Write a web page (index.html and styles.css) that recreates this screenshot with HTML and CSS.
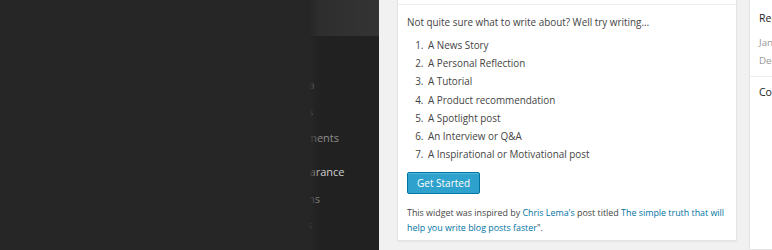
FILE: index.html
```html
<!DOCTYPE html>
<html lang="en">
  <head>
    <meta charset="UTF-8" />
    <title>Dashboard</title>
    <link rel="stylesheet" href="styles.css">
  </head>
  <body>
    <!-- dimmed admin side -->
    <div class="backdrop">
      <div class="backdrop-fill"></div>
      <nav class="admin-menu">
        <div class="admin-bar"></div>
        <ul class="menu-list">
          <li>Media</li>
          <li>Pages</li>
          <li>Comments</li>
          <li class="separator">Appearance</li>
          <li>Plugins</li>
          <li>Users</li>
        </ul>
      </nav>
    </div>

    <!-- dashboard widgets -->
    <main class="dashboard">
      <section class="postbox">
        <div class="postbox-header"></div>
        <div class="postbox-inside">
          <p class="intro">Not quite sure what to write about? Well try writing…</p>
          <ol class="idea-list">
            <li>A News Story</li>
            <li>A Personal Reflection</li>
            <li>A Tutorial</li>
            <li>A Product recommendation</li>
            <li>A Spotlight post</li>
            <li>An Interview or Q&amp;A</li>
            <li>A Inspirational or Motivational post</li>
          </ol>
          <a href="#" class="button-primary">Get Started</a>
          <p class="credit">
            This widget was inspired by <a href="#">Chris Lema's</a> post titled
            <a href="#">The simple truth that will help you write blog posts faster</a>".
          </p>
        </div>
      </section>

      <section class="postbox postbox-side">
        <h3 class="side-title">Recently Published</h3>
        <p class="side-date">Jan 1st, 12:00 am</p>
        <p class="side-date">Dec 20th, 3:12 pm</p>
        <h3 class="side-title side-next">Comments</h3>
      </section>
    </main>
  </body>
</html>
```

FILE: styles.css
```css
* {
  margin: 0;
  padding: 0;
  box-sizing: border-box;
}

body {
  display: flex;
  height: 250px;
  overflow: hidden;
  background: #f1f1f1;
  font-family: "Open Sans", "Liberation Sans", sans-serif;
  color: #444;
}

/* 左侧遮罩 */
.backdrop {
  display: flex;
  width: 379px;
  flex-shrink: 0;
}

.backdrop-fill {
  width: 310px;
  background: #272627;
}

.admin-menu {
  position: relative;
  width: 69px;
  overflow: hidden;
  background: #212121;
}

.admin-menu::after {
  content: "";
  position: absolute;
  top: 0;
  bottom: 0;
  left: 0;
  width: 10px;
  background: linear-gradient(to right, rgba(39, 38, 39, 0.9), rgba(33, 33, 33, 0));
}

.admin-bar {
  height: 36px;
  background: linear-gradient(to right, #2d2d2d, #343434);
}

.menu-list {
  list-style: none;
  margin-left: -27px;
  padding-top: 36px;
  font-size: 11px;
  color: #8e8e8e;
  white-space: nowrap;
}

.menu-list li {
  height: 26.5px;
  line-height: 26.5px;
}

.menu-list .separator {
  margin-top: 7.5px;
  color: #d0d0d0;
}

/* 仪表盘小工具 */
.dashboard {
  display: flex;
  gap: 12px;
  padding-left: 18px;
}

.postbox {
  background: #fff;
  border: 1px solid #e5e5e5;
  border-top: none;
  box-shadow: 0 1px 1px rgba(0, 0, 0, 0.04);
}

.postbox:first-child {
  width: 340px;
  height: 241px;
}

.postbox-header {
  height: 5px;
  border-bottom: 1px solid #eee;
}

.postbox-inside {
  padding: 0 9px;
}

.intro {
  margin-top: 8px;
  font-size: 9.9px;
  line-height: 18px;
}

.idea-list {
  margin-top: 5px;
  padding-left: 19px;
  font-size: 9.9px;
  line-height: 18.2px;
}

.idea-list li {
  padding-left: 2px;
}

.button-primary {
  display: inline-block;
  margin-top: 9px;
  height: 22px;
  padding: 0 9px;
  line-height: 20px;
  font-size: 10px;
  color: #fff;
  text-decoration: none;
  background: #2ea2cc;
  border: 1px solid #0074a2;
  border-radius: 2px;
  box-shadow: inset 0 1px 0 rgba(120, 200, 230, 0.5);
}

.credit {
  margin-top: 12px;
  font-size: 8.9px;
  line-height: 14.5px;
}

.credit a {
  color: #0074a2;
  text-decoration: none;
}

.postbox-side {
  width: 60px;
  height: 250px;
  padding-top: 10px;
}

.side-title {
  padding: 0 9px;
  font-size: 10.5px;
  font-weight: 400;
  line-height: 16px;
  color: #222;
  white-space: nowrap;
}

.side-date {
  padding: 0 9px;
  margin-top: 2px;
  font-size: 9.8px;
  line-height: 16px;
  color: #999;
  white-space: nowrap;
}

.side-date:first-of-type {
  margin-top: 9px;
}

.side-next {
  margin-top: 7px;
  padding-top: 7px;
  border-top: 1px solid #eee;
}
```
